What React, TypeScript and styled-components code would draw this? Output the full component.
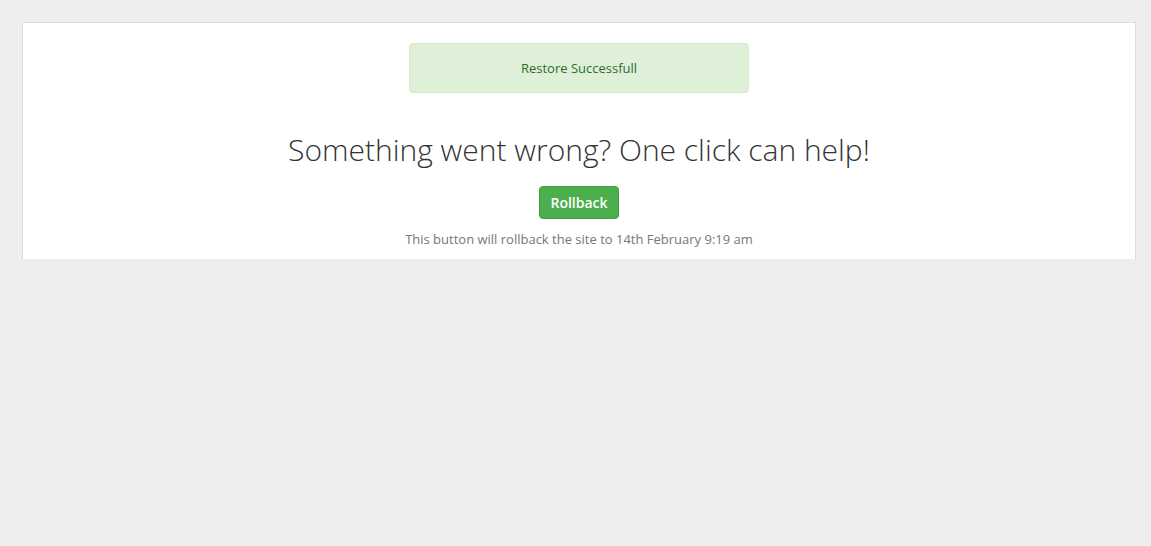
import React from "react";
import styled, { createGlobalStyle } from "styled-components";

const Global = createGlobalStyle`
  html, body { margin: 0; padding: 0; background: #eeeeee; }
  body { font-family: "Open Sans", "Noto Sans", sans-serif; }
`;

const Page = styled.div`
  padding: 22px 15px 0 22px;
`;

const Panel = styled.div`
  background: #ffffff;
  border: 1px solid #dddddd;
  border-bottom: none;
  height: 216px;
  display: flex;
  flex-direction: column;
  align-items: center;
  padding-top: 20px;
  box-sizing: content-box;
`;

const Alert = styled.div`
  width: 338px;
  height: 48px;
  background: #dff0d8;
  border: 1px solid #d6e9c6;
  border-radius: 4px;
  color: #2f6b30;
  font-size: 13px;
  display: flex;
  align-items: center;
  justify-content: center;
`;

const Heading = styled.h1`
  margin: 36px 0 0;
  font-size: 30px;
  font-weight: 300;
  color: #333333;
  line-height: 42px;
`;

const Button = styled.button`
  margin-top: 15px;
  height: 33px;
  padding: 0 10px;
  background: #4cae4c;
  border: 1px solid #449d44;
  border-radius: 4px;
  color: #ffffff;
  font-family: "Open Sans", sans-serif;
  font-size: 14px;
  font-weight: 600;
`;

const Note = styled.p`
  margin: 11px 0 0;
  font-size: 13px;
  color: #777777;
  line-height: 18px;
`;

export default function App() {
  return (
    <>
      <Global />
      <Page>
        <Panel>
          <Alert>Restore Successfull</Alert>
          <Heading>Something went wrong? One click can help!</Heading>
          <Button>Rollback</Button>
          <Note>This button will rollback the site to 14th February 9:19 am</Note>
        </Panel>
      </Page>
    </>
  );
}
